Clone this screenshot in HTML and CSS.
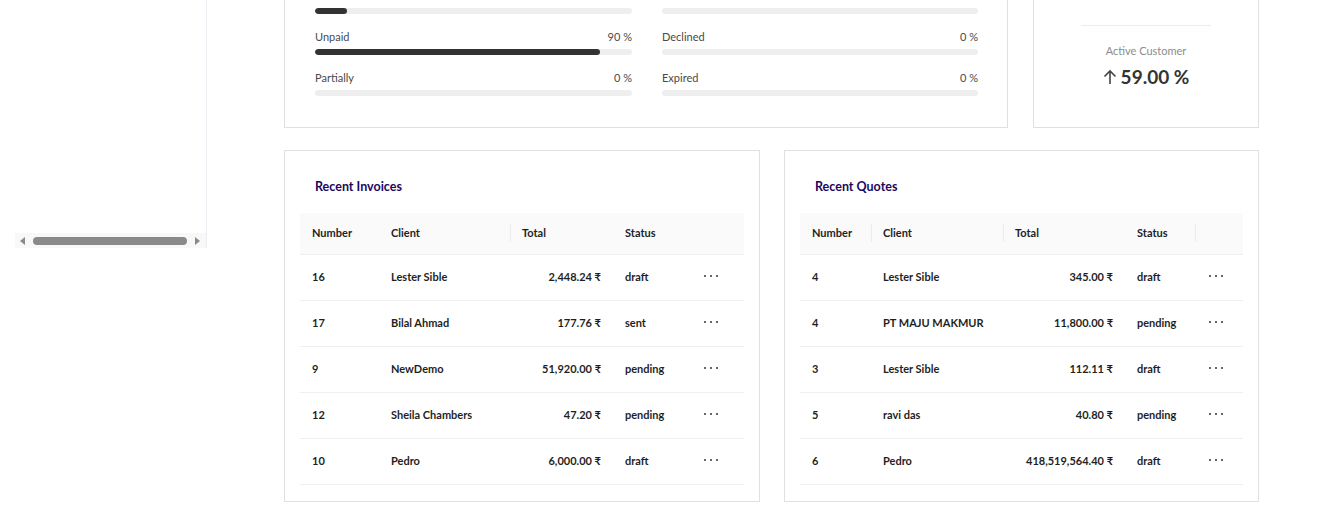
FILE: index.html
```html
<!DOCTYPE html>
<html>
<head>
<meta charset="utf-8">
<link rel="stylesheet" href="styles.css">
</head>
<body>
<div class="layout">
  <aside class="sider">
    <div class="sider-menu"></div>
    <div class="hscroll">
      <span class="arrow arrow-left"></span>
      <div class="thumb"></div>
      <span class="arrow arrow-right"></span>
    </div>
  </aside>
  <main class="content">
    <div class="top-row">
      <section class="card stats">
        <div class="stat-grid">
          <div class="stat-col">
            <div class="stat">
              <div class="stat-head"><span>Paid</span><span>10 %</span></div>
              <div class="bar"><div class="fill" style="width:10%"></div></div>
            </div>
            <div class="stat">
              <div class="stat-head"><span>Unpaid</span><span>90 %</span></div>
              <div class="bar"><div class="fill" style="width:90%"></div></div>
            </div>
            <div class="stat">
              <div class="stat-head"><span>Partially</span><span>0 %</span></div>
              <div class="bar"></div>
            </div>
          </div>
          <div class="stat-col">
            <div class="stat">
              <div class="stat-head"><span class="link">Accepted</span><span>0 %</span></div>
              <div class="bar"></div>
            </div>
            <div class="stat">
              <div class="stat-head"><span>Declined</span><span>0 %</span></div>
              <div class="bar"></div>
            </div>
            <div class="stat">
              <div class="stat-head"><span>Expired</span><span>0 %</span></div>
              <div class="bar"></div>
            </div>
          </div>
        </div>
      </section>
      <section class="card customer">
        <div class="divider"></div>
        <div class="cust-label">Active Customer</div>
        <div class="cust-value">
          <svg class="up" width="14" height="16" viewBox="0 0 14 16"><path d="M7 15V2M1.5 7.5L7 2l5.5 5.5" fill="none" stroke="#444" stroke-width="1.6"/></svg>
          <span>59.00 %</span>
        </div>
      </section>
    </div>

    <div class="bottom-row">
      <section class="card table-card">
        <h3 class="card-title">Recent Invoices</h3>
        <table class="tbl inv">
          <colgroup><col class="c1"><col class="c2"><col class="c3"><col class="c4"><col class="c5"></colgroup>
          <thead>
            <tr><th>Number</th><th>Client</th><th class="sep">Total</th><th>Status</th><th></th></tr>
          </thead>
          <tbody>
            <tr><td>16</td><td>Lester Sible</td><td class="num">2,448.24 ₹</td><td>draft</td><td><span class="dots"><i></i><i></i><i></i></span></td></tr>
            <tr><td>17</td><td>Bilal Ahmad</td><td class="num">177.76 ₹</td><td>sent</td><td><span class="dots"><i></i><i></i><i></i></span></td></tr>
            <tr><td>9</td><td>NewDemo</td><td class="num">51,920.00 ₹</td><td>pending</td><td><span class="dots"><i></i><i></i><i></i></span></td></tr>
            <tr><td>12</td><td>Sheila Chambers</td><td class="num">47.20 ₹</td><td>pending</td><td><span class="dots"><i></i><i></i><i></i></span></td></tr>
            <tr><td>10</td><td>Pedro</td><td class="num">6,000.00 ₹</td><td>draft</td><td><span class="dots"><i></i><i></i><i></i></span></td></tr>
          </tbody>
        </table>
      </section>
      <section class="card table-card">
        <h3 class="card-title">Recent Quotes</h3>
        <table class="tbl quo">
          <colgroup><col class="c1"><col class="c2"><col class="c3"><col class="c4"><col class="c5"></colgroup>
          <thead>
            <tr><th>Number</th><th class="sep">Client</th><th class="sep">Total</th><th>Status</th><th class="sep"></th></tr>
          </thead>
          <tbody>
            <tr><td>4</td><td>Lester Sible</td><td class="num">345.00 ₹</td><td>draft</td><td><span class="dots"><i></i><i></i><i></i></span></td></tr>
            <tr><td>4</td><td>PT MAJU MAKMUR</td><td class="num">11,800.00 ₹</td><td>pending</td><td><span class="dots"><i></i><i></i><i></i></span></td></tr>
            <tr><td>3</td><td>Lester Sible</td><td class="num">112.11 ₹</td><td>draft</td><td><span class="dots"><i></i><i></i><i></i></span></td></tr>
            <tr><td>5</td><td>ravi das</td><td class="num">40.80 ₹</td><td>pending</td><td><span class="dots"><i></i><i></i><i></i></span></td></tr>
            <tr><td>6</td><td>Pedro</td><td class="num">418,519,564.40 ₹</td><td>draft</td><td><span class="dots"><i></i><i></i><i></i></span></td></tr>
          </tbody>
        </table>
      </section>
    </div>
  </main>
</div>
</body>
</html>
```

FILE: styles.css
```css
* { box-sizing: border-box; }
html, body { margin: 0; padding: 0; background: #fff; overflow: hidden; }
body {
  font-family: "Lato", "Noto Sans", "DejaVu Sans", sans-serif;
  color: #1f1f1f;
  font-size: 11px;
}

.layout {
  display: flex;
  align-items: flex-start;
  margin-top: -40px;
}

/* Sidebar */
.sider {
  width: 207px;
  flex: none;
  height: 288px;
  border-right: 1px solid #ececf2;
  display: flex;
  flex-direction: column;
}
.sider-menu { flex: 1; }
.hscroll {
  height: 15px;
  margin-left: 15px;
  background: #f8f8f8;
  display: flex;
  align-items: center;
  padding: 0 6px 0 4px;
}
.arrow { width: 0; height: 0; border-top: 4px solid transparent; border-bottom: 4px solid transparent; }
.arrow-left { border-right: 5px solid #8a8a8a; margin-left: 1px; }
.arrow-right { border-left: 5px solid #8a8a8a; margin-left: 8px; }
.thumb {
  width: 154px;
  height: 8px;
  border-radius: 4px;
  background: #8a8a8a;
  margin-left: 8px;
}

/* Main */
.content {
  flex: 1;
  padding: 0 71px 0 77px;
}
.card {
  border: 1px solid #e0e0e0;
  background: #fff;
}
.top-row {
  display: grid;
  grid-template-columns: 1fr 226px;
  gap: 25px;
}

.stats { padding: 24px 29px 31px 30px; }
.stat-grid {
  display: grid;
  grid-template-columns: 317px 316px;
  column-gap: 30px;
}
.stat { margin-bottom: 14px; }
.stat:last-child { margin-bottom: 0; }
.stat-head {
  display: flex;
  justify-content: space-between;
  line-height: 16px;
  padding-top: 0.5px;
  font-size: 11px;
  color: #4a4a4a;
}
.link { color: #1677ff; }
.bar {
  margin-top: 4.5px;
  height: 6px;
  border-radius: 3px;
  background: #eeeeee;
  overflow: hidden;
}
.stat:first-child .bar { margin-top: 6.5px; }
.fill { height: 100%; background: #333333; border-radius: 3px; }

.customer {
  display: flex;
  flex-direction: column;
  justify-content: flex-end;
  align-items: center;
  padding-bottom: 38px;
}
.divider {
  width: 130px;
  height: 1px;
  background: #ececec;
  margin-bottom: 17px;
}
.cust-label {
  line-height: 16px;
  font-size: 11px;
  color: #8c8c8c;
}
.cust-value {
  margin-top: 6px;
  display: flex;
  align-items: center;
  gap: 4px;
  line-height: 24px;
  font-size: 19px;
  font-weight: 700;
  color: #333;
}
.up { display: block; }

/* Tables */
.bottom-row {
  margin-top: 22px;
  display: grid;
  grid-template-columns: 476px 475px;
  column-gap: 24px;
}
.table-card { padding: 15px 15px 16px; }
.card-title {
  margin: 11px 0 16px 15px;
  line-height: 20px;
  font-size: 12.5px;
  font-weight: 700;
  color: #22075e;
}
.tbl {
  width: 100%;
  border-collapse: collapse;
  table-layout: fixed;
}
.tbl th, .tbl td {
  padding: 0 12px;
  text-align: left;
  font-size: 11px;
  font-weight: 700;
  color: #1f1f1f;
  white-space: nowrap;
  border-bottom: 1px solid #efefef;
}
.tbl th {
  height: 41px;
  padding-bottom: 2px;
  background: #fafafa;
  position: relative;
}
.tbl td { height: 46px; padding-bottom: 1px; }
.tbl th.sep::before {
  content: "";
  position: absolute;
  left: 0;
  top: 11px;
  width: 1px;
  height: 18px;
  background: #ececec;
}
.tbl td.num { text-align: right; }

.inv .c1 { width: 79px; }
.inv .c2 { width: 131px; }
.inv .c3 { width: 103px; }
.inv .c4 { width: 77px; }
.inv .c5 { width: 54px; }

.quo .c1 { width: 71px; }
.quo .c2 { width: 132px; }
.quo .c3 { width: 122px; }
.quo .c4 { width: 70px; }
.quo .c5 { width: 48px; }

.tbl td:last-child { padding: 0 0 1px 14px; }
.dots {
  display: inline-flex;
  gap: 4px;
  vertical-align: middle;
  position: relative;
  top: -2px;
}
.dots i {
  width: 2px;
  height: 2px;
  background: #333;
  border-radius: 1px;
  display: block;
}
```
